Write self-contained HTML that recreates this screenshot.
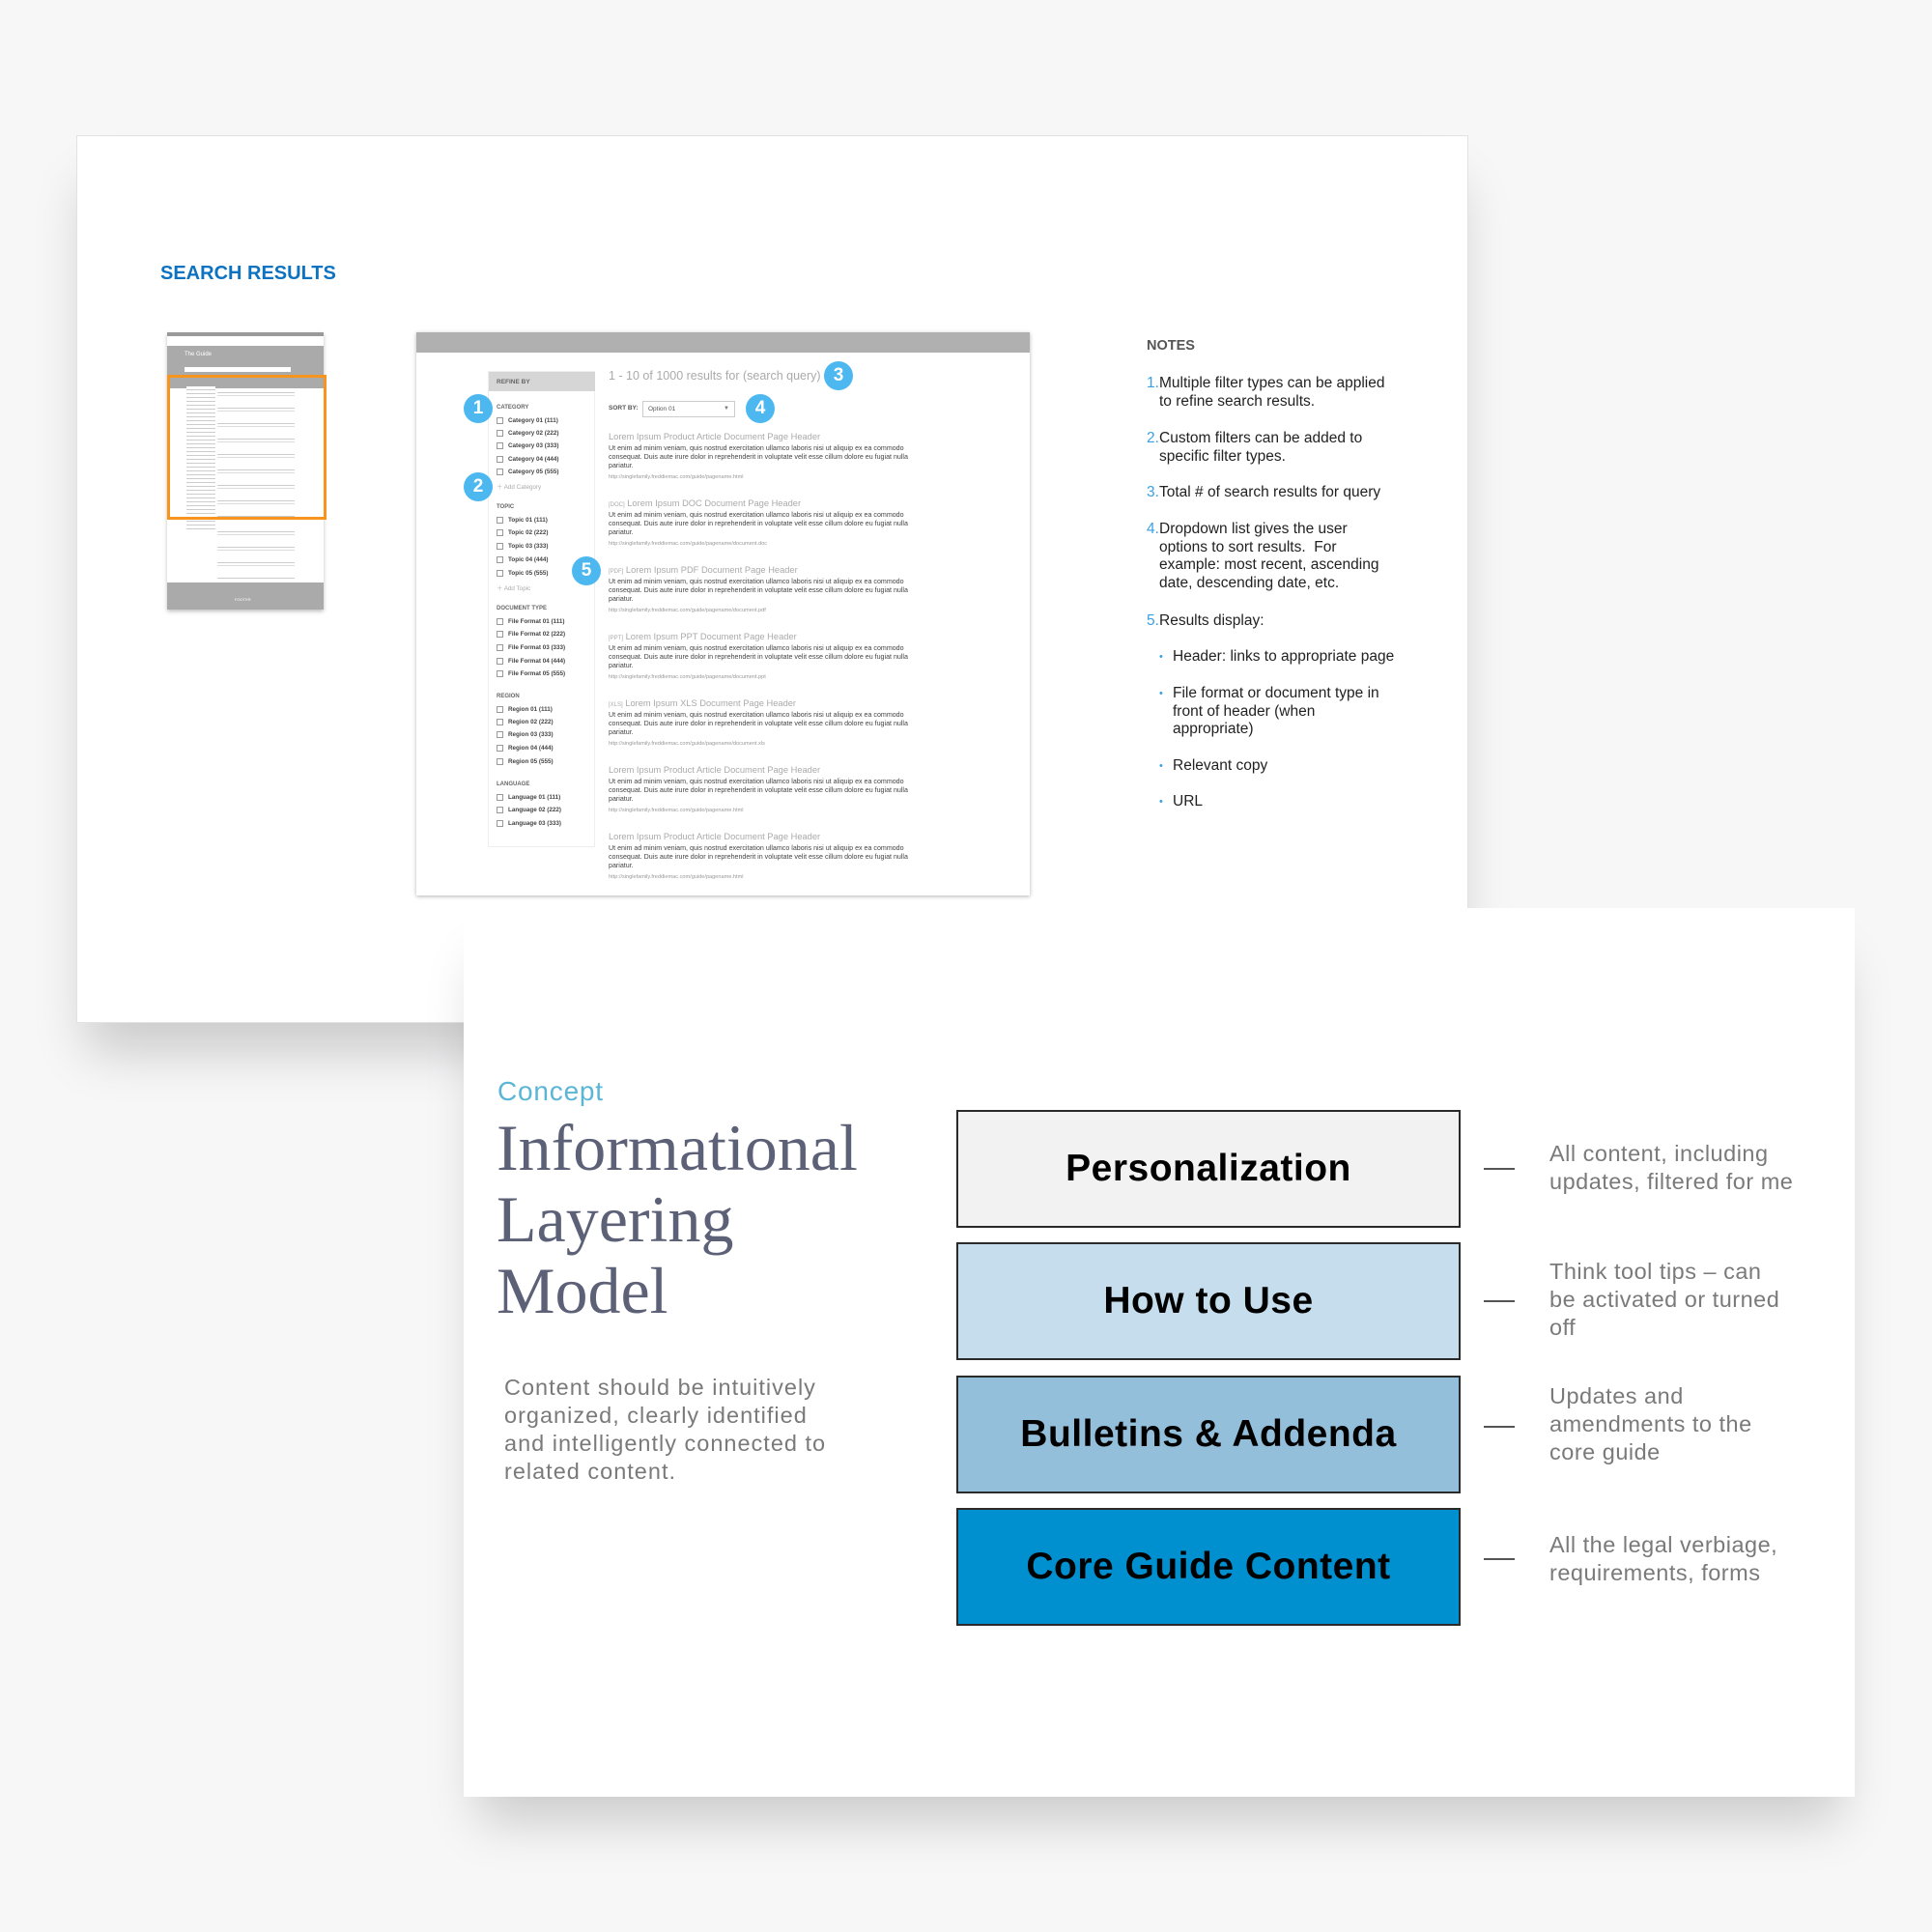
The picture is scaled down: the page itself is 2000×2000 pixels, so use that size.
<!DOCTYPE html>
<html><head><meta charset="utf-8">
<style>
*{margin:0;padding:0;box-sizing:border-box}
body{width:2000px;height:2000px;background:#f7f7f8;position:relative;overflow:hidden;font-family:"Liberation Sans",sans-serif}
.abs{position:absolute}
#top{left:79px;top:140px;width:1441px;height:919px;background:#fff;border:1px solid #e2e2e2;box-shadow:0 40px 50px -10px rgba(0,0,0,.18)}
#bot{left:480px;top:940px;width:1440px;height:920px;background:#fff;box-shadow:0 40px 50px -15px rgba(0,0,0,.18)}
.badge{position:absolute;width:30px;height:30px;border-radius:50%;background:#4db8f0;color:#fff;font-size:19px;font-weight:bold;text-align:center;line-height:30px}
.sb{position:absolute;left:0;font-size:6.3px;color:#444;white-space:nowrap;font-weight:bold}
.sb.h{color:#666;font-size:6px}
.sb i{display:inline-block;width:7px;height:7px;border:1px solid #999;vertical-align:middle;margin-right:5px}
.res{position:absolute;left:630px;width:330px}
.res .t{font-size:9.3px;color:#aaa;white-space:nowrap;height:13px}
.res .b{font-size:7.1px;line-height:9.2px;color:#444;white-space:nowrap}
.res .u{font-size:5.6px;color:#999;margin-top:3px}
.note{position:absolute;left:1187px;font-size:15.5px;line-height:18.6px;color:#222;width:300px;white-space:nowrap}
.note span.n{color:#3aa0e0;position:absolute;left:0}
.note div{padding-left:13px}
.bul{position:absolute;left:1200px;font-size:15.5px;line-height:18.6px;color:#222;width:300px;white-space:nowrap}
.bul:before{content:"•";color:#3aa0e0;position:absolute;left:0;font-size:11px}
.bul div{padding-left:14px}
.box{position:absolute;left:990px;width:522px;border:2px solid #2a2a2a;text-align:center;font-weight:bold;font-size:39px;color:#000;letter-spacing:.5px}
.dash{position:absolute;left:1536px;width:32px;height:2px;background:#555}
.rt{position:absolute;left:1604px;font-size:23.5px;line-height:29px;color:#7a7a7a;white-space:nowrap;letter-spacing:.5px}
</style></head><body>
<div id="top" class="abs"></div>
<div class="abs" style="left:166px;top:272px;font-size:20px;font-weight:bold;color:#0d72c0">SEARCH RESULTS</div>

<!-- thumbnail -->
<div class="abs" style="left:173px;top:344px;width:162px;height:287px;background:#fff;box-shadow:0 2px 4px rgba(0,0,0,.25);overflow:hidden">
 <div class="abs" style="left:0;top:0;width:162px;height:4px;background:#999"></div>
 <div class="abs" style="left:0;top:14px;width:162px;height:44px;background:#aaa"></div>
 <div class="abs" style="left:18px;top:20px;font-size:6px;color:#fff">The Guide</div>
 <div class="abs" style="left:18px;top:36px;width:110px;height:5px;background:#fff"></div>
 <div class="abs" style="left:20px;top:56px;width:30px;height:150px;background:repeating-linear-gradient(#fff 0 3px,#ccc 3px 4px)"></div>
 <div class="abs" style="left:52px;top:60px;width:80px;height:195px;background:repeating-linear-gradient(#fff 0 2px,#ccc 2px 3px,#fff 3px 5px,#ddd 5px 6px,#fff 6px 16px)"></div>
 <div class="abs" style="left:0;top:259px;width:162px;height:28px;background:#aaa"></div>
 <div class="abs" style="left:70px;top:274px;font-size:4px;color:#fff">FOOTER</div>
</div>
<div class="abs" style="left:173px;top:388px;width:165px;height:150px;border:3px solid #f7941d"></div>

<!-- wireframe -->
<div class="abs" style="left:431px;top:344px;width:635px;height:583px;background:#fff;box-shadow:0 1px 4px rgba(0,0,0,.3)">
 <div class="abs" style="left:0;top:0;width:635px;height:21px;background:#b0b0b0"></div>
</div>
<div class="abs" style="left:505px;top:384px;width:111px;height:493px;border:1px solid #eee;background:#fff">
 <div class="abs" style="left:0;top:0;width:110px;height:20px;background:#d6d6d6"></div>
 <div class="abs" style="left:8px;top:7px;font-size:6.5px;font-weight:bold;color:#666">REFINE BY</div>
 <div class="abs" style="left:8px;top:0;width:100px">
  <div class="sb h" style="top:34px">CATEGORY</div>
  <div class="sb" style="top:47px"><i></i>Category 01 (111)</div>
  <div class="sb" style="top:60px"><i></i>Category 02 (222)</div>
  <div class="sb" style="top:73px"><i></i>Category 03 (333)</div>
  <div class="sb" style="top:87px"><i></i>Category 04 (444)</div>
  <div class="sb" style="top:100px"><i></i>Category 05 (555)</div>
  <div class="sb" style="top:114px;color:#aaa;font-weight:normal">＋ Add Category</div>
  <div class="sb h" style="top:137px">TOPIC</div>
  <div class="sb" style="top:150px"><i></i>Topic 01 (111)</div>
  <div class="sb" style="top:163px"><i></i>Topic 02 (222)</div>
  <div class="sb" style="top:177px"><i></i>Topic 03 (333)</div>
  <div class="sb" style="top:191px"><i></i>Topic 04 (444)</div>
  <div class="sb" style="top:205px"><i></i>Topic 05 (555)</div>
  <div class="sb" style="top:219px;color:#aaa;font-weight:normal">＋ Add Topic</div>
  <div class="sb h" style="top:242px">DOCUMENT TYPE</div>
  <div class="sb" style="top:255px"><i></i>File Format 01 (111)</div>
  <div class="sb" style="top:268px"><i></i>File Format 02 (222)</div>
  <div class="sb" style="top:282px"><i></i>File Format 03 (333)</div>
  <div class="sb" style="top:296px"><i></i>File Format 04 (444)</div>
  <div class="sb" style="top:309px"><i></i>File Format 05 (555)</div>
  <div class="sb h" style="top:333px">REGION</div>
  <div class="sb" style="top:346px"><i></i>Region 01 (111)</div>
  <div class="sb" style="top:359px"><i></i>Region 02 (222)</div>
  <div class="sb" style="top:372px"><i></i>Region 03 (333)</div>
  <div class="sb" style="top:386px"><i></i>Region 04 (444)</div>
  <div class="sb" style="top:400px"><i></i>Region 05 (555)</div>
  <div class="sb h" style="top:424px">LANGUAGE</div>
  <div class="sb" style="top:437px"><i></i>Language 01 (111)</div>
  <div class="sb" style="top:450px"><i></i>Language 02 (222)</div>
  <div class="sb" style="top:464px"><i></i>Language 03 (333)</div>
 </div>
</div>
<div class="abs" style="left:630px;top:382px;font-size:12.5px;color:#aaa">1 - 10 of 1000 results for (search query)</div>
<div class="abs" style="left:630px;top:419px;font-size:6.5px;font-weight:bold;color:#555">SORT BY:</div>
<div class="abs" style="left:665px;top:415px;width:96px;height:17px;border:1px solid #ccc;font-size:6.5px;color:#555;padding:4px 5px">Option 01<span style="position:absolute;right:5px;top:4px;font-size:6px;color:#777">▼</span></div>

<div class="res" style="top:447px"><div class="t">Lorem Ipsum Product Article Document Page Header</div><div class="b">Ut enim ad minim veniam, quis nostrud exercitation ullamco laboris nisi ut aliquip ex ea commodo<br>consequat. Duis aute irure dolor in reprehenderit in voluptate velit esse cillum dolore eu fugiat nulla<br>pariatur.</div><div class="u">http://singlefamily.freddiemac.com/guide/pagename.html</div></div>
<div class="res" style="top:516px"><div class="t"><small style="font-size:6px">[DOC]</small> Lorem Ipsum DOC Document Page Header</div><div class="b">Ut enim ad minim veniam, quis nostrud exercitation ullamco laboris nisi ut aliquip ex ea commodo<br>consequat. Duis aute irure dolor in reprehenderit in voluptate velit esse cillum dolore eu fugiat nulla<br>pariatur.</div><div class="u">http://singlefamily.freddiemac.com/guide/pagename/document.doc</div></div>
<div class="res" style="top:585px"><div class="t"><small style="font-size:6px">[PDF]</small> Lorem Ipsum PDF Document Page Header</div><div class="b">Ut enim ad minim veniam, quis nostrud exercitation ullamco laboris nisi ut aliquip ex ea commodo<br>consequat. Duis aute irure dolor in reprehenderit in voluptate velit esse cillum dolore eu fugiat nulla<br>pariatur.</div><div class="u">http://singlefamily.freddiemac.com/guide/pagename/document.pdf</div></div>
<div class="res" style="top:654px"><div class="t"><small style="font-size:6px">[PPT]</small> Lorem Ipsum PPT Document Page Header</div><div class="b">Ut enim ad minim veniam, quis nostrud exercitation ullamco laboris nisi ut aliquip ex ea commodo<br>consequat. Duis aute irure dolor in reprehenderit in voluptate velit esse cillum dolore eu fugiat nulla<br>pariatur.</div><div class="u">http://singlefamily.freddiemac.com/guide/pagename/document.ppt</div></div>
<div class="res" style="top:723px"><div class="t"><small style="font-size:6px">[XLS]</small> Lorem Ipsum XLS Document Page Header</div><div class="b">Ut enim ad minim veniam, quis nostrud exercitation ullamco laboris nisi ut aliquip ex ea commodo<br>consequat. Duis aute irure dolor in reprehenderit in voluptate velit esse cillum dolore eu fugiat nulla<br>pariatur.</div><div class="u">http://singlefamily.freddiemac.com/guide/pagename/document.xls</div></div>
<div class="res" style="top:792px"><div class="t">Lorem Ipsum Product Article Document Page Header</div><div class="b">Ut enim ad minim veniam, quis nostrud exercitation ullamco laboris nisi ut aliquip ex ea commodo<br>consequat. Duis aute irure dolor in reprehenderit in voluptate velit esse cillum dolore eu fugiat nulla<br>pariatur.</div><div class="u">http://singlefamily.freddiemac.com/guide/pagename.html</div></div>
<div class="res" style="top:861px"><div class="t">Lorem Ipsum Product Article Document Page Header</div><div class="b">Ut enim ad minim veniam, quis nostrud exercitation ullamco laboris nisi ut aliquip ex ea commodo<br>consequat. Duis aute irure dolor in reprehenderit in voluptate velit esse cillum dolore eu fugiat nulla<br>pariatur.</div><div class="u">http://singlefamily.freddiemac.com/guide/pagename.html</div></div>

<div class="badge" style="left:480px;top:408px">1</div>
<div class="badge" style="left:480px;top:489px">2</div>
<div class="badge" style="left:853px;top:374px">3</div>
<div class="badge" style="left:772px;top:408px">4</div>
<div class="badge" style="left:592px;top:576px">5</div>

<!-- notes -->
<div class="abs" style="left:1187px;top:350px;font-size:14.5px;font-weight:bold;color:#555">NOTES</div>
<div class="note" style="top:388px"><span class="n">1.</span><div>Multiple filter types can be applied<br>to refine search results.</div></div>
<div class="note" style="top:445px"><span class="n">2.</span><div>Custom filters can be added to<br>specific filter types.</div></div>
<div class="note" style="top:501px"><span class="n">3.</span><div>Total # of search results for query</div></div>
<div class="note" style="top:539px"><span class="n">4.</span><div>Dropdown list gives the user<br>options to sort results.&nbsp; For<br>example: most recent, ascending<br>date, descending date, etc.</div></div>
<div class="note" style="top:634px"><span class="n">5.</span><div>Results display:</div></div>
<div class="bul" style="top:671px"><div>Header: links to appropriate page</div></div>
<div class="bul" style="top:709px"><div>File format or document type in<br>front of header (when<br>appropriate)</div></div>
<div class="bul" style="top:784px"><div>Relevant copy</div></div>
<div class="bul" style="top:821px"><div>URL</div></div>

<!-- bottom card -->
<div id="bot" class="abs"></div>
<div class="abs" style="left:515px;top:1114px;font-size:28px;color:#5bb6d6;letter-spacing:.8px">Concept</div>
<div class="abs" style="left:514px;top:1151px;font-family:'Liberation Serif',serif;font-size:68px;line-height:74px;color:#5d6177">Informational<br>Layering<br>Model</div>
<div class="abs" style="left:522px;top:1422px;font-size:23.5px;line-height:29px;color:#7a7a7a;letter-spacing:1px;white-space:nowrap">Content should be intuitively<br>organized, clearly identified<br>and intelligently connected to<br>related content.</div>

<div class="box" style="top:1149px;height:122px;line-height:118px;background:#f2f2f2">Personalization</div>
<div class="box" style="top:1286px;height:122px;line-height:118px;background:#c5ddec">How to Use</div>
<div class="box" style="top:1424px;height:122px;line-height:118px;background:#93bfdb">Bulletins &amp; Addenda</div>
<div class="box" style="top:1561px;height:122px;line-height:118px;background:#0090d0">Core Guide Content</div>
<div class="dash" style="top:1209px"></div>
<div class="dash" style="top:1346px"></div>
<div class="dash" style="top:1476px"></div>
<div class="dash" style="top:1613px"></div>
<div class="rt" style="top:1180px">All content, including<br>updates, filtered for me</div>
<div class="rt" style="top:1302px">Think tool tips – can<br>be activated or turned<br>off</div>
<div class="rt" style="top:1431px">Updates and<br>amendments to the<br>core guide</div>
<div class="rt" style="top:1585px">All the legal verbiage,<br>requirements, forms</div>
</body></html>
